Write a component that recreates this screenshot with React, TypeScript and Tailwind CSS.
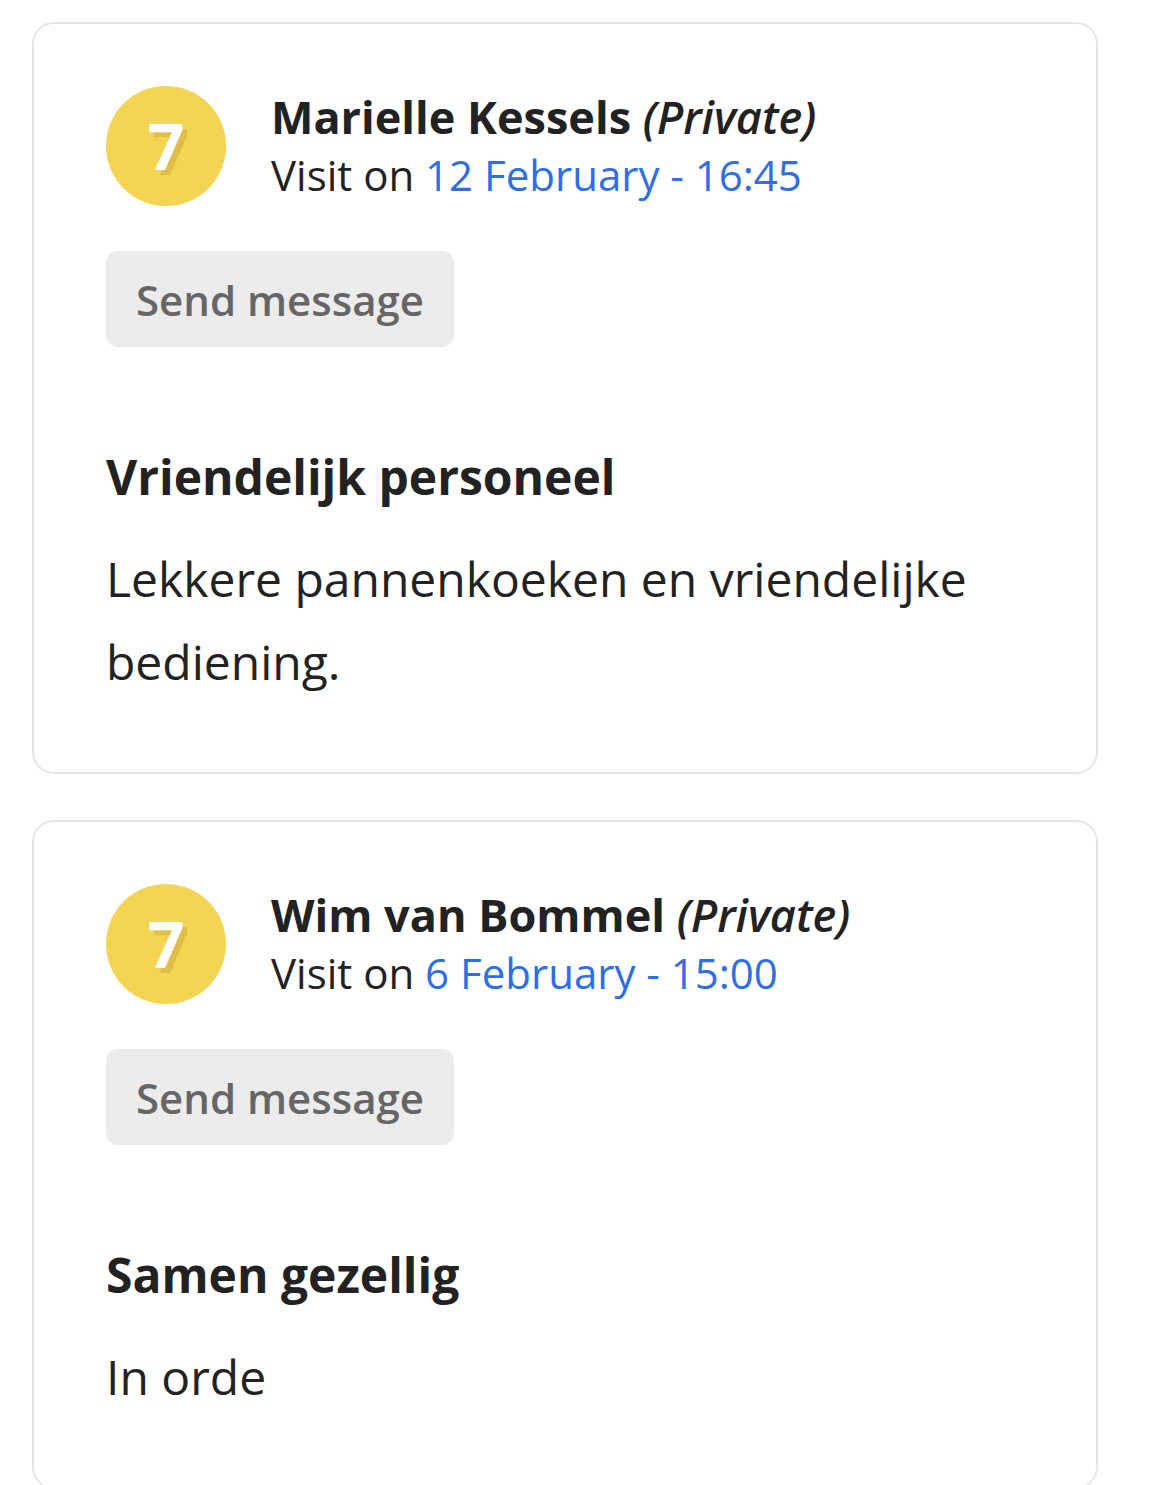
import React from 'react';

interface Review {
  name: string;
  date: string;
  score: number;
  title: string;
  body: string;
}

const reviews: Review[] = [
  { name: 'Marielle Kessels', date: '12 February - 16:45', score: 7, title: 'Vriendelijk personeel', body: 'Lekkere pannenkoeken en vriendelijke bediening.' },
  { name: 'Wim van Bommel', date: '6 February - 15:00', score: 7, title: 'Samen gezellig', body: 'In orde' },
];

const ScoreBadge = ({ score }: { score: number }) => (
  <div className="w-[120px] h-[120px] shrink-0 rounded-full bg-[#f4d453] flex items-center justify-center">
    <span className="text-[64px] font-bold leading-none text-white [text-shadow:5px_5px_0_#dfbf45]">{score}</span>
  </div>
);

const ReviewCard = ({ review }: { review: Review }) => (
  <div className="border-2 border-[#e6e6e6] rounded-[22px] bg-white pl-[72px] pr-[60px] pt-[62px] pb-[69px]">
    {/* Header */}
    <div className="flex items-center gap-[45px]">
      <ScoreBadge score={review.score} />
      <div className="flex flex-col">
        <p className="text-[45px] leading-[58px] text-[#222]">
          <span className="font-bold">{review.name}</span>{' '}
          <span className="italic font-semibold">(Private)</span>
        </p>
        <p className="text-[42px] leading-[58px] text-[#222]">
          Visit on <span className="text-[#2e6ee6]">{review.date}</span>
        </p>
      </div>
    </div>

    <button className="mt-[45px] h-[96px] w-[348px] rounded-[12px] bg-[#ececec] text-[42px] font-semibold text-[#666]">
      Send message
    </button>

    <h3 className="mt-[100px] text-[48px] font-bold text-[#222] leading-[60px]">{review.title}</h3>
    <p className="mt-[30px] text-[48px] leading-[83px] text-[#222]">{review.body}</p>
  </div>
);

export default function App() {
  return (
    <div className="min-h-screen bg-white pl-[32px] pr-[51px] pt-[22px] pb-[40px] flex flex-col gap-[46px]" style={{ fontFamily: '"Open Sans", sans-serif' }}>
      {reviews.map((r) => (
        <ReviewCard key={r.name} review={r} />
      ))}
    </div>
  );
}
